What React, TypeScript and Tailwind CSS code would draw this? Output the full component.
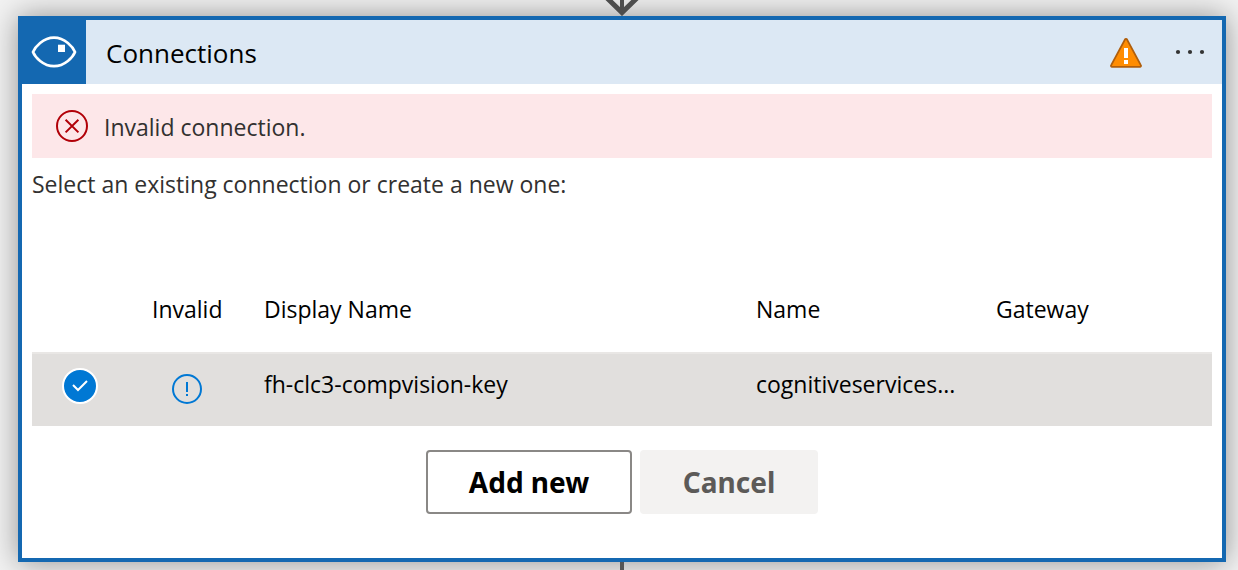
import React from "react";

type Connection = { id: string; displayName: string; name: string; gateway: string };

const connections: Connection[] = [
  { id: "c1", displayName: "fh-clc3-compvision-key", name: "cognitiveservices...", gateway: "" },
];

function VisionIcon() {
  return (
    <svg viewBox="0 0 48 36" className="h-9 w-12" fill="none" aria-hidden="true">
      <path
        d="M3 18C5 13 13 3.6 24 3.6S43 13 45 18C43 23 35 32.2 24 32.2S5 23 3 18Z"
        stroke="#fff"
        strokeWidth="2.7"
        strokeLinejoin="round"
      />
      <rect x="28" y="10.7" width="7" height="7.3" fill="#fff" />
    </svg>
  );
}

function WarningIcon() {
  return (
    <svg viewBox="0 0 32 30" className="mt-0.5 h-[30px] w-8" role="img" aria-label="Warning">
      <path
        d="M14.9 1.6 1.2 27.2a1 1 0 0 0 .9 1.6h27.8a1 1 0 0 0 .9-1.6L17.1 1.6a1.3 1.3 0 0 0-2.2 0Z"
        fill="#ff8c00"
        stroke="#b05e0b"
        strokeWidth="1.8"
        strokeLinejoin="round"
      />
      <path d="M14 10h4v10h-4zM14 22h4v4h-4z" fill="#fff" />
    </svg>
  );
}

function ErrorIcon() {
  return (
    <svg viewBox="0 0 32 32" className="size-8" fill="none" stroke="#b10008" strokeWidth="2" aria-hidden="true">
      <circle cx="16" cy="16" r="15" />
      <path d="m9.6 9.8 12.8 12.6M22.4 9.8 9.6 22.4" />
    </svg>
  );
}

function InvalidIcon() {
  return (
    <svg viewBox="0 0 30 30" className="size-[30px]" fill="none" role="img" aria-label="Invalid">
      <circle cx="15" cy="15" r="14" stroke="#0078d4" strokeWidth="2" />
      <path d="M14 8h2v10h-2zM14 20h2v2h-2z" fill="#0078d4" />
    </svg>
  );
}

export default function App() {
  return (
    <main className="flex min-h-screen flex-col overflow-hidden bg-[#f2f2f2] pr-3 pl-[18px] font-['Open_Sans','Noto_Sans',sans-serif] text-black">
      <svg viewBox="0 0 36 16" className="relative z-10 h-4 w-9 self-center" fill="none" stroke="#4d4d4d" aria-hidden="true">
        <path d="M18 0v14" strokeWidth="4" />
        <path d="M2-3 18 12.6 34-3" strokeWidth="5" />
      </svg>

      <section className="border-4 border-[#1468b1] bg-white shadow-[0_0_28px_rgba(0,0,0,0.4)]">
        <header className="flex h-16 items-center bg-[#dce8f4]">
          <div className="flex h-16 w-16 items-center justify-center bg-[#1468b1]">
            <VisionIcon />
          </div>
          <h1 className="ml-5 flex-1 pt-0.5 text-[26px] leading-8">Connections</h1>
          <WarningIcon />
          <button type="button" aria-label="More commands" className="mr-4 ml-8 flex h-8 items-center">
            <svg viewBox="0 0 32 8" className="h-2 w-8" fill="#333" aria-hidden="true">
              <circle cx="4" cy="4" r="2.1" />
              <circle cx="16" cy="4" r="2.1" />
              <circle cx="28" cy="4" r="2.1" />
            </svg>
          </button>
        </header>

        <div className="px-2.5 pt-2.5 pb-11">
          <div role="alert" className="flex h-16 items-center gap-4 bg-[#fde7e9] px-6 text-[#323130]">
            <ErrorIcon />
            <p className="pt-0.5 text-[23px] leading-8">Invalid connection.</p>
          </div>
          <p className="pt-2.5 text-[23px] leading-8 text-[#323130]">
            Select an existing connection or create a new one:
          </p>

          <table className="mt-17 w-full table-fixed text-left text-[23px] leading-8">
            <colgroup>
              <col className="w-28" />
              <col className="w-28" />
              <col />
              <col className="w-60" />
              <col className="w-56" />
            </colgroup>
            <thead>
              <tr className="h-[85px]">
                <td />
                <th scope="col" className="px-2 pb-0.5 font-normal">Invalid</th>
                <th scope="col" className="px-2 pb-0.5 font-normal">Display Name</th>
                <th scope="col" className="px-2 pb-0.5 font-normal">Name</th>
                <th scope="col" className="px-2 pb-0.5 font-normal">Gateway</th>
              </tr>
            </thead>
            <tbody>
              {connections.map((c) => (
                <tr key={c.id} className="h-[73px] border-t-2 border-[#e9e7e5] bg-[#e1dfdd]">
                  <td className="pb-2 pl-[30px]">
                    <div className="grid size-9 place-items-center">
                      <input
                        type="radio"
                        name="connection"
                        defaultChecked
                        aria-label={c.displayName}
                        className="col-start-1 row-start-1 size-9 appearance-none rounded-full border-2 border-white bg-[#0078d4]"
                      />
                      <svg viewBox="0 0 16 12" className="pointer-events-none col-start-1 row-start-1 h-3 w-4" fill="none" stroke="#fff" strokeWidth="2" aria-hidden="true">
                        <path d="m1 5 5 5 9-9" />
                      </svg>
                    </div>
                  </td>
                  <td className="pb-0.5 pl-7">
                    <InvalidIcon />
                  </td>
                  <td className="truncate px-2 pb-3">{c.displayName}</td>
                  <td className="truncate px-2 pb-3">{c.name}</td>
                  <td className="truncate px-2 pb-3">{c.gateway}</td>
                </tr>
              ))}
            </tbody>
          </table>

          <div className="mt-6 flex justify-center gap-2 font-['Noto_Sans','Open_Sans',sans-serif] text-[28px] leading-8 font-bold">
            <button type="button" className="h-16 w-[206px] rounded-sm border-2 border-[#8a8886] bg-white">
              Add new
            </button>
            <button type="button" className="h-16 w-[178px] rounded-sm bg-[#f3f2f1] text-[#5c5a58]">
              Cancel
            </button>
          </div>
        </div>
      </section>

      <div className="relative z-10 w-1 flex-1 self-center bg-[#555]" />
    </main>
  );
}
